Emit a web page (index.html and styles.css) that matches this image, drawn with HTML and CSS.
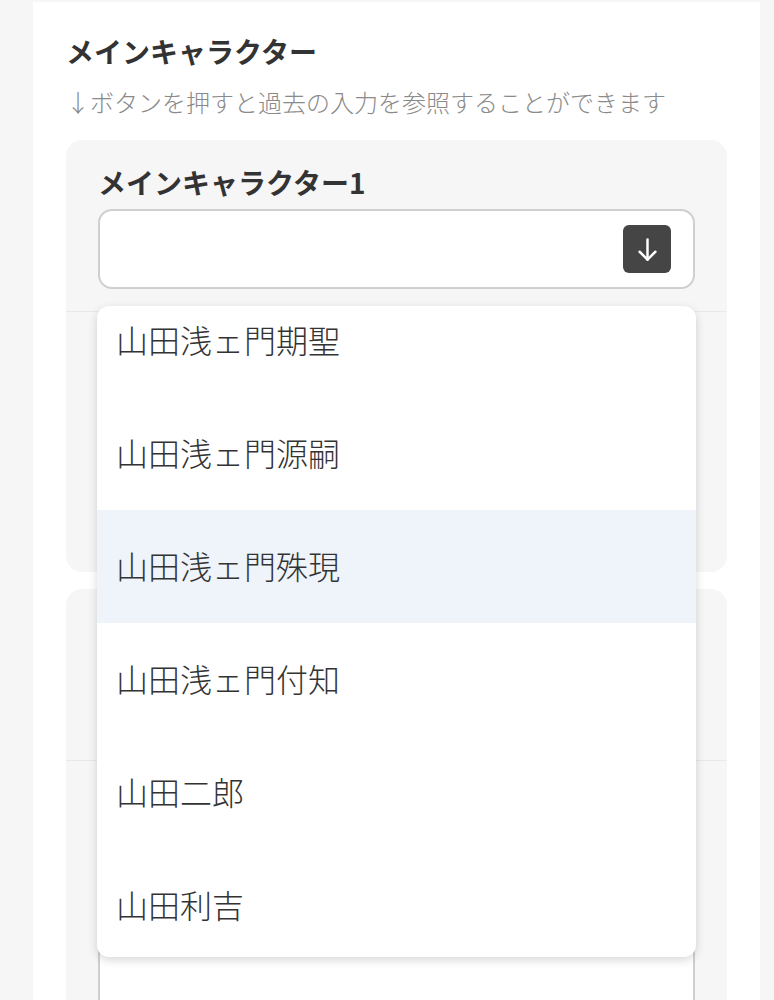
FILE: index.html
```html
<!DOCTYPE html>
<html lang="ja">
<head>
    <meta charset="UTF-8">
    <meta name="viewport" content="width=device-width, initial-scale=1.0">
    <title>メインキャラクター</title>
    <link rel="stylesheet" href="styles.css">
</head>
<body>
    <main class="page">
        <h1 class="title">メインキャラクター</h1>
        <p class="note">↓ボタンを押すと過去の入力を参照することができます</p>

        <!-- 1人目 -->
        <section class="card">
            <div class="section">
                <div class="label">メインキャラクター1</div>
                <div class="field">
                    <button class="history-btn" type="button">
                        <svg width="27" height="27" viewBox="0 0 24 24" fill="none" stroke="#fff" stroke-width="2.2" stroke-linecap="round" stroke-linejoin="round">
                            <path d="M12 3v18"/>
                            <path d="M5 14l7 7 7-7"/>
                        </svg>
                    </button>
                    <!-- 過去の入力 -->
                    <div class="dropdown">
                        <ul class="options">
                            <li>山田浅ェ門期聖</li>
                            <li>山田浅ェ門源嗣</li>
                            <li class="active">山田浅ェ門殊現</li>
                            <li>山田浅ェ門付知</li>
                            <li>山田二郎</li>
                            <li>山田利吉</li>
                        </ul>
                    </div>
                </div>
            </div>
            <div class="section">
                <div class="label-space"></div>
                <div class="field tall"></div>
            </div>
        </section>

        <!-- 2人目 -->
        <section class="card">
            <div class="section">
                <div class="label-space"></div>
                <div class="field"></div>
            </div>
            <div class="section">
                <div class="label-space"></div>
                <div class="spacer"></div>
                <div class="field"></div>
            </div>
        </section>
    </main>
</body>
</html>
```

FILE: styles.css
```css
html,body{
    margin: 0;
    background-color: #f6f6f6;
    font-family: "Noto Sans CJK JP", "Noto Sans", sans-serif;
    color: #333;
}
.page{
    width: 727px;
    margin: 2px 0 0 33px;
    background-color: #fff;
    padding: 29px 33px 40px;
    box-sizing: border-box;
}
.title{
    margin: 0;
    font-size: 28px;
    line-height: 40px;
    font-weight: bold;
}
.note{
    margin: 14px 0 0;
    font-size: 24px;
    line-height: 34px;
    font-weight: 300;
    color: #8a8a8a;
}
.card{
    margin-top: 21px;
    background-color: #f6f6f6;
    border-radius: 16px;
}
.card + .card{
    margin-top: 17px;
}
.section{
    padding: 22px 32px;
    border-bottom: 1px solid #e9e9e9;
}
.section:last-child{
    border-bottom: none;
}
.label{
    font-size: 28px;
    line-height: 40px;
    font-weight: bold;
    margin-bottom: 7px;
}
.label-space{
    height: 47px;
}
/* 入力欄 */
.field{
    position: relative;
    height: 76px;
    background-color: #fff;
    border: 2px solid #cfcfcf;
    border-radius: 14px;
    display: flex;
    align-items: center;
    justify-content: flex-end;
    padding-right: 22px;
}
.field.tall{
    height: 165px;
}
.spacer{
    height: 110px;
}
.history-btn{
    width: 48px;
    height: 48px;
    border: none;
    padding: 0;
    border-radius: 6px;
    background-color: #454545;
    display: flex;
    align-items: center;
    justify-content: center;
}
/* 候補リスト */
.dropdown{
    position: absolute;
    top: calc(100% + 19px);
    left: -3px;
    right: -3px;
    height: 651px;
    overflow: hidden;
    background-color: #fff;
    border-radius: 12px;
    box-shadow: 0 3px 10px rgba(0,0,0,0.16);
    z-index: 10;
}
.options{
    margin: -22px 0 0;
    padding: 0;
    list-style: none;
}
.options li{
    height: 113px;
    box-sizing: border-box;
    padding: 0 0 4px 19px;
    display: flex;
    align-items: center;
    font-size: 32px;
    font-weight: 300;
    color: #333;
}
.options li.active{
    background-color: #eff3fa;
}
```
